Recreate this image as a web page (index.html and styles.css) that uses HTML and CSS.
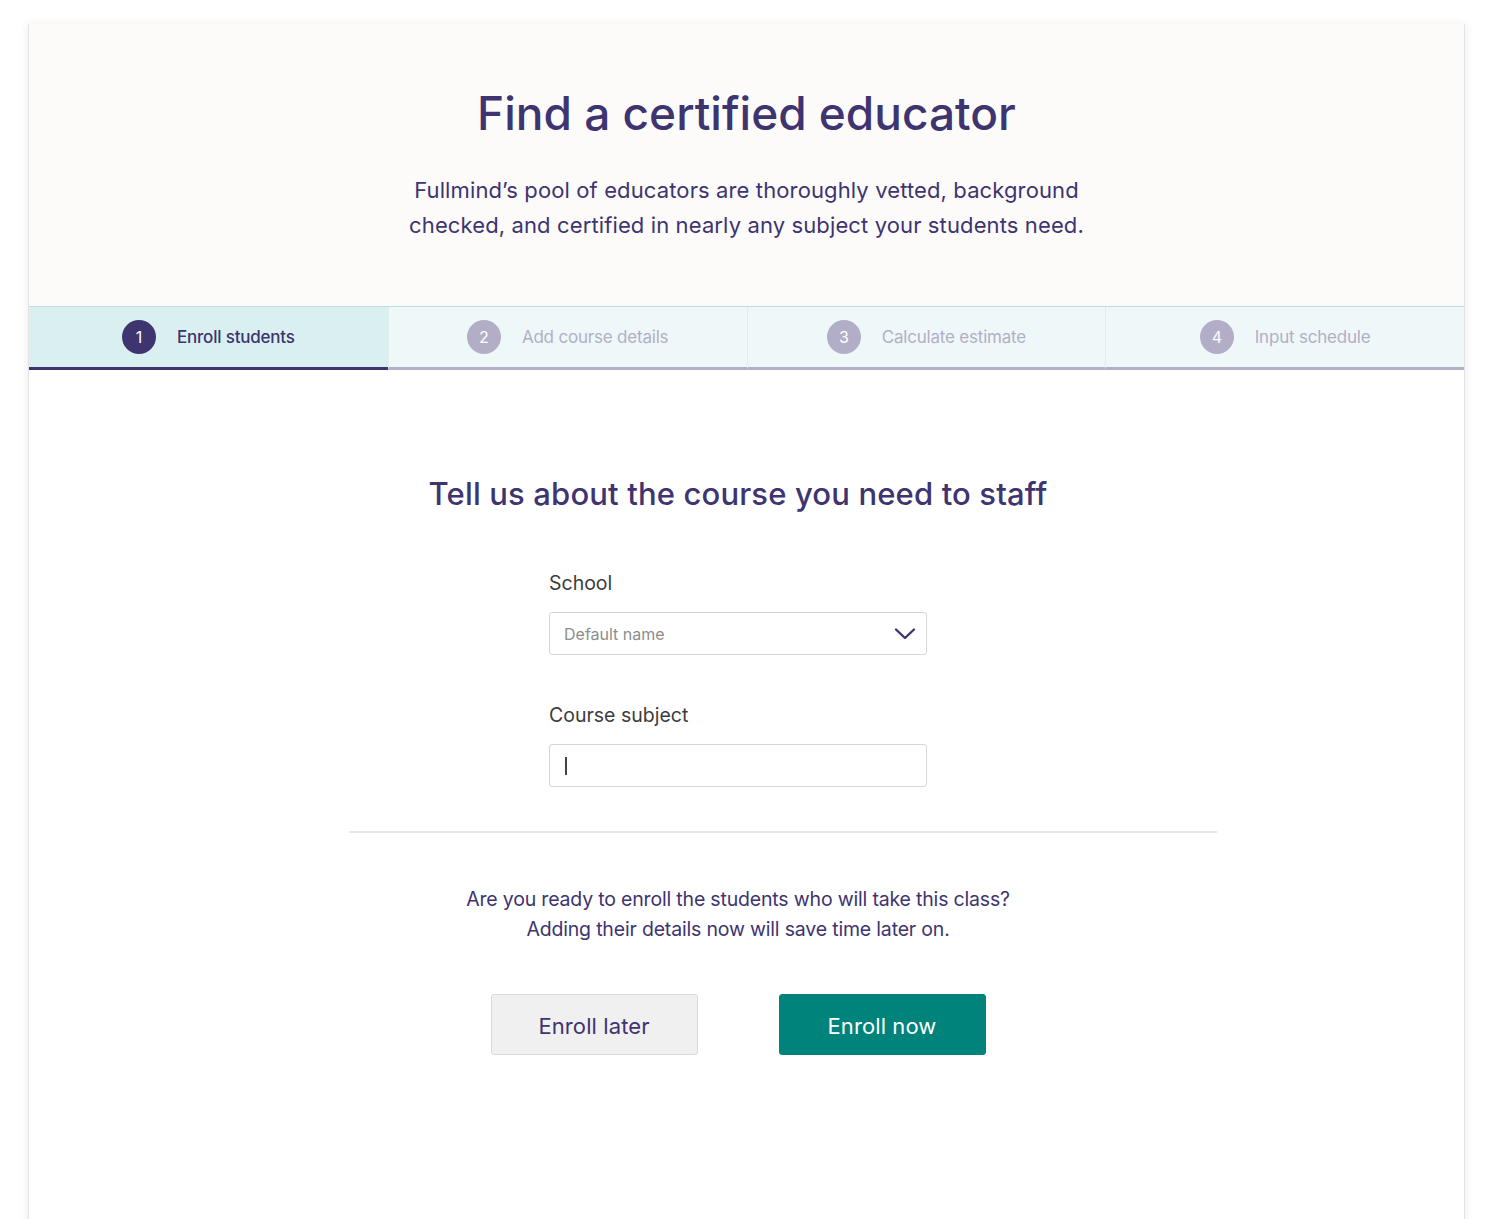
FILE: index.html
```html
<!DOCTYPE html>
<html lang="en">
<head>
<meta charset="utf-8">
<title>Find a certified educator</title>
<link rel="stylesheet" href="styles.css">
</head>
<body>
<div class="card">
  <header class="hero">
    <h1 class="hero-title">Find a certified educator</h1>
    <p class="hero-text">Fullmind’s pool of educators are thoroughly vetted, background<br>checked, and certified in nearly any subject your students need.</p>
  </header>
  <nav class="stepper">
    <div class="step step-active"><span class="step-num">1</span><span class="step-label">Enroll students</span></div>
    <div class="step"><span class="step-num">2</span><span class="step-label">Add course details</span></div>
    <div class="step"><span class="step-num">3</span><span class="step-label">Calculate estimate</span></div>
    <div class="step"><span class="step-num">4</span><span class="step-label">Input schedule</span></div>
  </nav>
  <main class="content">
    <h2 class="section-title">Tell us about the course you need to staff</h2>
    <div class="form">
      <div class="field">
        <label class="field-label">School</label>
        <div class="select">
          <span class="placeholder">Default name</span>
          <svg class="chevron" width="22" height="14" viewBox="0 0 22 14"><path d="M2 2.5 L11 11 L20 2.5" fill="none" stroke="#3d3470" stroke-width="2.4" stroke-linecap="round" stroke-linejoin="round"/></svg>
        </div>
      </div>
      <div class="field">
        <label class="field-label">Course subject</label>
        <div class="input"><span class="caret"></span></div>
      </div>
    </div>
    <hr class="divider">
    <p class="question">Are you ready to enroll the students who will take this class?<br>Adding their details now will save time later on.</p>
    <div class="actions">
      <button class="btn btn-secondary">Enroll later</button>
      <button class="btn btn-primary">Enroll now</button>
    </div>
  </main>
</div>
</body>
</html>
```

FILE: styles.css
```css
* { box-sizing: border-box; }
html, body { margin: 0; padding: 0; }
body {
  background: #ffffff;
  font-family: Inter, "Open Sans", "Liberation Sans", sans-serif;
  color: #3d3470;
}
.card {
  margin: 24px 30px 0 28px;
  height: 1220px;
  background: #ffffff;
  border-left: 1px solid #e4e4e4;
  border-right: 1px solid #e4e4e4;
  box-shadow: 0 0 10px rgba(0,0,0,0.08);
}
.hero {
  background: #fcfbfa;
  height: 282px;
  padding-top: 62px;
  text-align: center;
}
.hero-title {
  margin: 0;
  font-size: 46px;
  font-weight: 500;
  letter-spacing: 0;
  line-height: 54px;
  color: #3d3470;
}
.hero-text {
  margin: 33px 0 0;
  font-size: 22px;
  line-height: 35px;
  letter-spacing: 0.12px;
  color: #3d3470;
}
.stepper {
  display: grid;
  grid-template-columns: repeat(4, 1fr);
  border-top: 1px solid #bddede;
}
.step {
  height: 63px;
  display: flex;
  align-items: center;
  justify-content: center;
  gap: 21px;
  background: #eff8f8;
  border-bottom: 3px solid #b3aec8;
  border-left: 1px solid #ddeeee;
  color: #b3aec8;
  font-size: 17px;
  letter-spacing: -0.2px;
}
.step:first-child { border-left: 0; }
.step-active {
  background: #daeff0;
  border-bottom-color: #3d3470;
  color: #3d3470;
  font-weight: 500;
}
.step-num {
  width: 34px;
  height: 34px;
  border-radius: 50%;
  background: #b3aec8;
  color: #ffffff;
  display: flex;
  align-items: center;
  justify-content: center;
  font-size: 16px;
  font-weight: 400;
}
.step-active .step-num { background: #3d3470; }
.content {
  padding: 104px 17px 0 0;
  display: flex;
  flex-direction: column;
  align-items: center;
}
.section-title {
  margin: 0;
  font-size: 31px;
  font-weight: 500;
  letter-spacing: 0.15px;
  line-height: 40px;
  color: #3d3470;
}
.form {
  width: 378px;
  margin-top: 54px;
  display: flex;
  flex-direction: column;
  gap: 45px;
}
.field { display: flex; flex-direction: column; }
.field-label {
  font-size: 19.5px;
  line-height: 30px;
  color: #3c3c3c;
  letter-spacing: 0;
  margin-bottom: 14px;
}
.select, .input {
  height: 43px;
  border: 1px solid #d6d6d6;
  border-radius: 3px;
  background: #ffffff;
  display: flex;
  align-items: center;
  padding: 0 10px 0 14px;
}
.select { justify-content: space-between; }
.placeholder {
  font-size: 16px;
  color: #8d8d8d;
  letter-spacing: 0;
}
.caret {
  width: 1.5px;
  height: 18px;
  background: #444444;
  margin-left: 1px;
}
.divider {
  align-self: flex-start;
  width: 868px;
  margin: 44px 0 0 320px;
  border: 0;
  border-top: 2px solid #e8e8e8;
}
.question {
  margin: 51px 0 0;
  text-align: center;
  font-size: 19.5px;
  line-height: 30px;
  letter-spacing: -0.18px;
  color: #3d3470;
}
.actions {
  margin-top: 50px;
  display: flex;
  gap: 81px;
}
.btn {
  width: 207px;
  height: 61px;
  padding-top: 3px;
  border-radius: 3px;
  font-family: inherit;
  font-size: 22px;
  letter-spacing: 0.1px;
  cursor: pointer;
}
.btn-secondary {
  background: #f0f0f0;
  border: 1px solid #dadada;
  color: #3d3470;
}
.btn-primary {
  background: #00837b;
  border: 1px solid #00837b;
  color: #ffffff;
}
```
